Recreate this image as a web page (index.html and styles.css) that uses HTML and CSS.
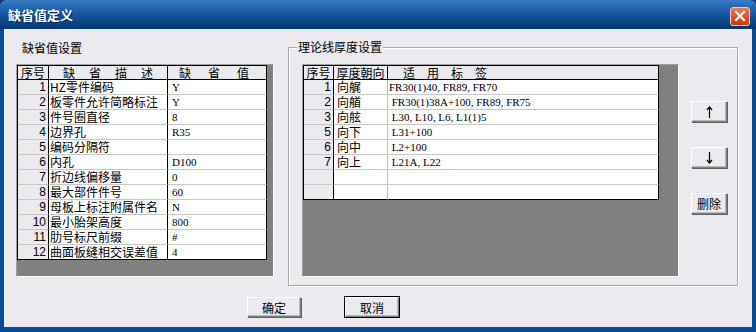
FILE: index.html
```html
<!DOCTYPE html>
<html lang="zh-CN">
<head>
  <meta charset="UTF-8" />
  <title>缺省值定义</title>
  <link rel="stylesheet" href="styles.css">
</head>
<body>
  <div class="window">
    <div class="titlebar">
      <span class="title">缺省值定义</span>
      <button class="close" aria-label="关闭">
        <svg width="12" height="12" viewBox="0 0 12 12"><path d="M2 2L10 10M10 2L2 10" stroke="#fff" stroke-width="2.2" stroke-linecap="square"/></svg>
      </button>
    </div>

    <div class="frame">
      <div class="main">
        <div class="left">
          <div class="left-label">缺省值设置</div>
          <div class="grid grid-left">
            <table>
              <tr class="head">
                <th class="w-num">序号</th>
                <th class="w-desc"><span class="sp14">缺省描述</span></th>
                <th class="w-val"><span class="sp17">缺省值</span></th>
              </tr>
              <tr><td class="num">1</td><td class="txt">HZ零件编码</td><td class="val">Y</td></tr>
              <tr><td class="num">2</td><td class="txt">板零件允许简略标注</td><td class="val">Y</td></tr>
              <tr><td class="num">3</td><td class="txt">件号圈直径</td><td class="val">8</td></tr>
              <tr><td class="num">4</td><td class="txt">边界孔</td><td class="val">R35</td></tr>
              <tr><td class="num">5</td><td class="txt">编码分隔符</td><td class="val"></td></tr>
              <tr><td class="num">6</td><td class="txt">内孔</td><td class="val">D100</td></tr>
              <tr><td class="num">7</td><td class="txt">折边线偏移量</td><td class="val">0</td></tr>
              <tr><td class="num">8</td><td class="txt">最大部件件号</td><td class="val">60</td></tr>
              <tr><td class="num">9</td><td class="txt">母板上标注附属件名</td><td class="val">N</td></tr>
              <tr><td class="num">10</td><td class="txt">最小胎架高度</td><td class="val">800</td></tr>
              <tr><td class="num">11</td><td class="txt">肋号标尺前缀</td><td class="val">#</td></tr>
              <tr><td class="num">12</td><td class="txt">曲面板缝相交误差值</td><td class="val">4</td></tr>
            </table>
          </div>
        </div>

        <div class="groupbox">
          <span class="legend">理论线厚度设置</span>
          <div class="grid grid-right">
            <table>
              <tr class="head">
                <th class="w-num2">序号</th>
                <th class="w-dir">厚度朝向</th>
                <th class="w-tag"><span class="sp12">适用标签</span></th>
              </tr>
              <tr><td class="num">1</td><td class="dir">向艉</td><td class="tag">FR30(1)40, FR89, FR70</td></tr>
              <tr><td class="num">2</td><td class="dir">向艏</td><td class="tag"> FR30(1)38A+100, FR89, FR75</td></tr>
              <tr><td class="num">3</td><td class="dir">向舷</td><td class="tag"> L30, L10, L6, L1(1)5</td></tr>
              <tr><td class="num">5</td><td class="dir">向下</td><td class="tag"> L31+100</td></tr>
              <tr><td class="num">6</td><td class="dir">向中</td><td class="tag"> L2+100</td></tr>
              <tr><td class="num">7</td><td class="dir">向上</td><td class="tag"> L21A, L22</td></tr>
              <tr><td class="num"></td><td class="dir"></td><td class="tag"></td></tr>
              <tr><td class="num"></td><td class="dir"></td><td class="tag"></td></tr>
            </table>
          </div>
          <div class="side-buttons">
            <button class="btn small" aria-label="上移">
              <svg width="7" height="12" viewBox="0 0 7 12"><path d="M3.5 1V12M1 4L3.5 1L6 4" stroke="#000" stroke-width="1.2" fill="none"/></svg>
            </button>
            <button class="btn small" aria-label="下移">
              <svg width="7" height="12" viewBox="0 0 7 12"><path d="M3.5 0V11M1 8L3.5 11L6 8" stroke="#000" stroke-width="1.2" fill="none"/></svg>
            </button>
            <button class="btn small">删除</button>
          </div>
        </div>
      </div>

      <div class="footer">
        <button class="btn wide">确定</button>
        <button class="btn wide default">取消</button>
      </div>
    </div>
  </div>
</body>
</html>
```

FILE: styles.css
```css
* {
  box-sizing: border-box;
}

body {
  margin: 0;
  background: #0b3a78;
  font-family: "Noto Sans CJK SC", sans-serif;
  font-size: 12px;
  color: #000;
}

.window {
  width: 756px;
  height: 332px;
  display: flex;
  flex-direction: column;
}

.titlebar {
  height: 29px;
  display: flex;
  align-items: center;
  justify-content: space-between;
  padding: 0 6px 0 8px;
  background: linear-gradient(#3a7cc6 0, #1d5fa9 35%, #0b4788 75%, #05366e 100%);
  border-radius: 6px 6px 0 0;
}

.title {
  color: #fff;
  font-weight: bold;
  font-size: 13px;
  line-height: 16px;
  text-shadow: 1px 1px 0 #0a2a5a;
}

.close {
  width: 20px;
  height: 19px;
  padding: 0;
  margin-top: 3px;
  display: flex;
  align-items: center;
  justify-content: center;
  border: 1px solid #f4c8b8;
  border-radius: 3px;
  background: linear-gradient(#ec7a5a, #dc4a24 60%, #c83a18);
}

.frame {
  flex: 1;
  background: #ebeaee;
  border-style: solid;
  border-color: #0a4a96;
  border-width: 0 4px 5px 4px;
}

.main {
  display: flex;
  align-items: flex-start;
  padding: 12px 0 0 12px;
}

.left {
  width: 258px;
}

.left-label {
  height: 14px;
  line-height: 14px;
  padding-left: 6px;
}

.grid {
  background: #808080;
  border: 1px solid;
  border-color: #a0a0a0 #fff #fff #a0a0a0;
}

.grid-left {
  margin-top: 9px;
  width: 258px;
  height: 213px;
}

.grid table {
  border-collapse: separate;
  border-spacing: 0;
  table-layout: fixed;
  border-top: 1px solid #000;
  border-left: 1px solid #000;
}

.grid tr {
  height: 15px;
}

.grid tr.head {
  height: 14px;
}

.grid th {
  padding: 0;
  height: 14px;
  line-height: 13px;
  font-weight: normal;
  background: #ebeaee;
  border-right: 1px solid #000;
  border-bottom: 1px solid #000;
  text-align: center;
  white-space: nowrap;
}

.grid td {
  padding: 0;
  height: 15px;
  line-height: 14px;
  background: #fff;
  border-right: 1px solid #000;
  border-bottom: 1px solid #c8c8c8;
  white-space: pre;
}

.grid tr:last-child td {
  border-bottom-color: #000;
}

.grid td.num {
  background: #ebeaee;
  text-align: right;
  padding-right: 2px;
  font-family: "Liberation Sans", sans-serif;
  font-size: 12px;
}

.w-num { width: 31px; }
.w-desc { width: 113px; }
.w-val { width: 89px; }

.w-num2 { width: 30px; }
.w-dir { width: 54px; }
.w-tag {
  width: 271px;
  text-align: left !important;
  padding-left: 3px !important;
}

.sp14 { letter-spacing: 14px; padding-left: 14px; }
.sp17 { letter-spacing: 17px; padding-left: 11px; }
.sp12 { letter-spacing: 12px; padding-left: 12px; }

.txt {
  padding-left: 1px !important;
}

.val {
  padding-left: 4px !important;
  font-family: "Liberation Serif", serif;
  font-size: 11px;
}

.dir {
  padding-left: 3px !important;
  border-right-color: #c0c0c0 !important;
}

.tag {
  padding-left: 1px !important;
  font-family: "Liberation Serif", serif;
  font-size: 11px;
}

.groupbox {
  position: relative;
  display: flex;
  align-items: flex-start;
  width: 450px;
  height: 239px;
  margin: 6px 0 0 14px;
  padding: 16px 0 0 13px;
  border: 1px solid #a8a8a8;
  box-shadow: 1px 1px 0 #fff, inset 1px 1px 0 #fff;
}

.legend {
  position: absolute;
  top: -8px;
  left: 8px;
  padding: 0 1px;
  line-height: 14px;
  background: #ebeaee;
}

.grid-right {
  width: 377px;
  height: 213px;
}

.side-buttons {
  display: flex;
  flex-direction: column;
  gap: 25px;
  margin: 37px 0 0 12px;
}

.btn {
  display: flex;
  align-items: center;
  justify-content: center;
  padding: 0;
  font-family: "Noto Sans CJK SC", sans-serif;
  font-size: 12px;
  color: #000;
  background: #ebeaee;
  border: 1px solid;
  border-color: #fff #808080 #808080 #fff;
  box-shadow: inset -1px -1px 0 #b8b8b8, 1px 1px 0 #606060;
}

.btn.small {
  width: 36px;
  height: 21px;
}

.btn.wide {
  width: 54px;
  height: 20px;
}

.btn.default {
  outline: 1px solid #000;
}

.footer {
  display: flex;
  gap: 44px;
  padding: 11px 0 0 243px;
}
```
